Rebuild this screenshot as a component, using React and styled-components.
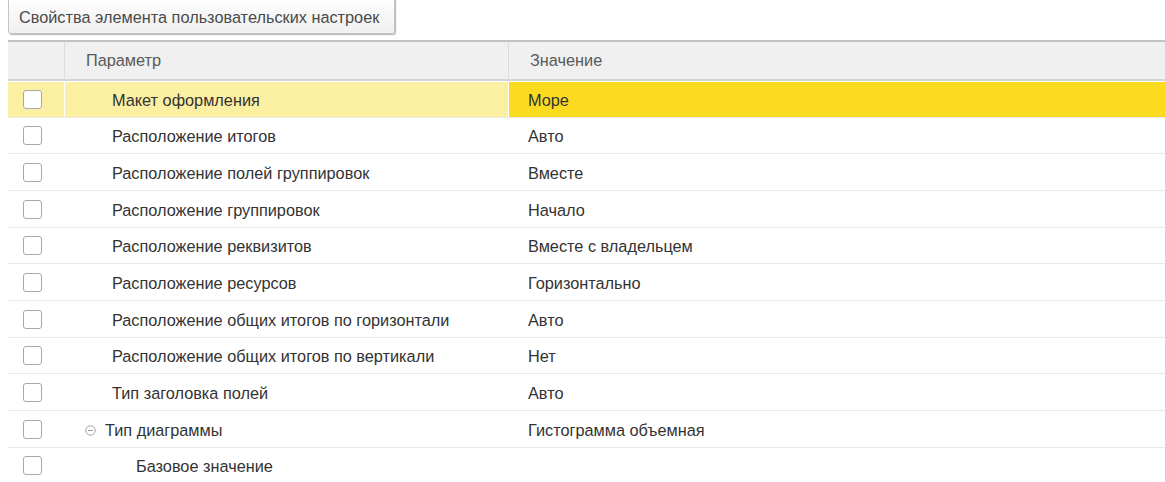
import React from "react";
import styled, { createGlobalStyle } from "styled-components";

const Global = createGlobalStyle`
  html, body { margin: 0; padding: 0; background: #fff; }
  body { font-family: Arial, "Liberation Sans", sans-serif; }
`;

const Page = styled.div`
  padding: 0 0 0 8px;
  width: 1165px;
  box-sizing: border-box;
  overflow: hidden;
`;

const Toolbar = styled.div`
  display: flex;
  height: 40px;
  align-items: flex-start;
`;

const Button = styled.button`
  height: 40px;
  margin-top: -6px;
  padding: 6px 15px 0 10px;
  font: 16.3px Arial, "Liberation Sans", sans-serif;
  color: #4a4a4a;
  background: linear-gradient(#ffffff, #f0f0f0);
  border: 1px solid #c4c4c4;
  border-radius: 3px;
  box-shadow: 1px 1px 1px rgba(0, 0, 0, 0.3);
  white-space: nowrap;
`;

const Table = styled.div`
  border-top: 2px solid #c2c2c2;
  display: grid;
  grid-template-columns: 56px 444px 1fr;
`;

const HeaderCell = styled.div`
  height: 37px;
  background: #f0f0f0;
  border-bottom: 2px solid #d4d4d4;
  border-left: ${(p) => (p.$first ? "none" : "1px solid #dcdcdc")};
  color: #595959;
  font-size: 16.3px;
  display: flex;
  align-items: center;
  padding-left: ${(p) => (p.$first ? 0 : "21px")};
`;

const Row = styled.div`
  display: contents;
`;

const Cell = styled.div`
  height: 36.67px;
  box-sizing: border-box;
  display: flex;
  align-items: center;
  padding-top: 3px;
  font-size: 16.3px;
  color: #333;
  white-space: nowrap;
  border-bottom: 1px solid #e8e8e8;
  border-left: ${(p) => (p.$first ? "none" : p.$selected ? "1px solid #fff" : "1px solid transparent")};
  background: ${(p) => (p.$value && p.$selected ? "#fadb20" : p.$selected ? "#fbf0a2" : "#fff")};
  padding-left: ${(p) => p.$indent || 0}px;
  ${(p) => p.$selected && "border-top: 1px solid #fff;"}
`;

const CheckCell = styled(Cell)`
  justify-content: flex-start;
  padding-left: 15px;
  padding-top: 1px;
`;

const Checkbox = styled.span`
  width: 17px;
  height: 17px;
  border: 1px solid #a8a8a8;
  border-radius: 3px;
  background: #fff;
`;

const Toggle = styled.svg`
  width: 11px;
  height: 11px;
  margin-right: 9px;
  margin-left: -1px;
`;

const rows = [
  ["Макет оформления", "Море", 1],
  ["Расположение итогов", "Авто", 1],
  ["Расположение полей группировок", "Вместе", 1],
  ["Расположение группировок", "Начало", 1],
  ["Расположение реквизитов", "Вместе с владельцем", 1],
  ["Расположение ресурсов", "Горизонтально", 1],
  ["Расположение общих итогов по горизонтали", "Авто", 1],
  ["Расположение общих итогов по вертикали", "Нет", 1],
  ["Тип заголовка полей", "Авто", 1],
  ["Тип диаграммы", "Гистограмма объемная", 0, true],
  ["Базовое значение", "", 2],
];

export default function App() {
  return (
    <Page>
      <Global />
      <Toolbar>
        <Button>Свойства элемента пользовательских настроек</Button>
      </Toolbar>
      <Table>
        <HeaderCell $first />
        <HeaderCell>Параметр</HeaderCell>
        <HeaderCell>Значение</HeaderCell>
        {rows.map(([name, value, level, group], i) => {
          const sel = i === 0;
          const indent = group ? 21 : level === 2 ? 71 : 47;
          return (
            <Row key={name}>
              <CheckCell $first $selected={sel}>
                <Checkbox />
              </CheckCell>
              <Cell $selected={sel} $indent={indent}>
                {group && (
                  <Toggle viewBox="0 0 11 11">
                    <circle cx="5.5" cy="5.5" r="4.7" fill="none" stroke="#a0a0a0" strokeWidth="1" />
                    <line x1="3" y1="5.5" x2="8" y2="5.5" stroke="#a0a0a0" strokeWidth="1" />
                  </Toggle>
                )}
                {name}
              </Cell>
              <Cell $selected={sel} $value $indent={19}>
                {value}
              </Cell>
            </Row>
          );
        })}
      </Table>
    </Page>
  );
}
